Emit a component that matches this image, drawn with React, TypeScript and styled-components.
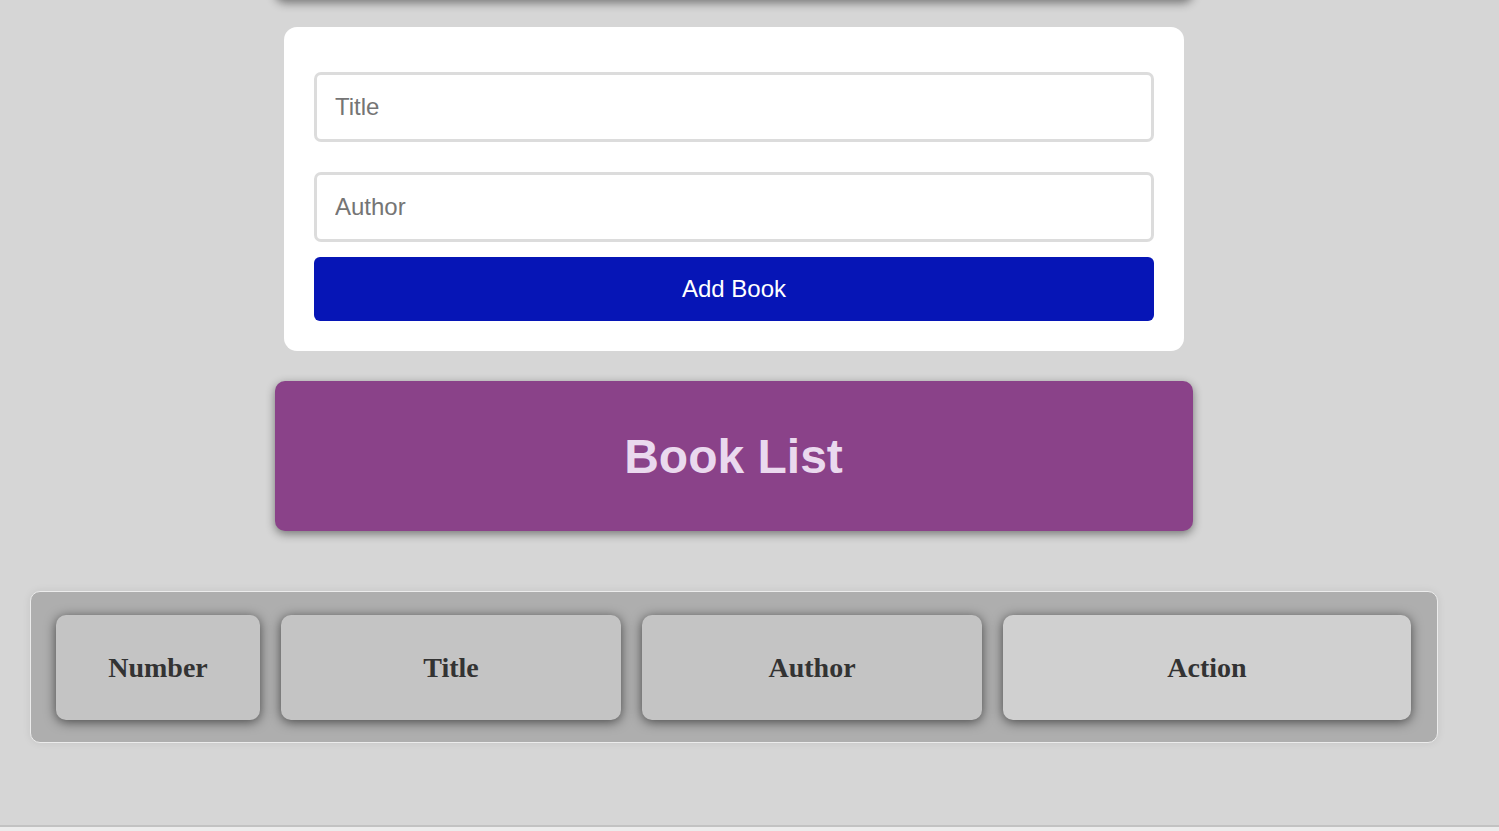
import React from "react";
import styled, { createGlobalStyle } from "styled-components";

const Global = createGlobalStyle`
  html, body { margin: 0; padding: 0; background: #d6d6d6; }
  body { font-family: "Liberation Sans", Arial, sans-serif; overflow: hidden; }
  * { box-sizing: border-box; }
`;

const Page = styled.div`
  width: 1468px;
  display: flex;
  flex-direction: column;
  align-items: center;
`;

const Banner = styled.div<{ $offscreen?: boolean }>`
  width: 918px;
  height: 150px;
  margin-top: ${(p) => (p.$offscreen ? "-150px" : "30px")};
  margin-right: 1px;
  background: #8a4289;
  border-radius: 10px;
  box-shadow: 0 3px 10px rgba(0, 0, 0, 0.45);
  display: flex;
  align-items: center;
  justify-content: center;
`;

const BannerTitle = styled.h1`
  margin: 0;
  font-family: "Liberation Sans", Arial, sans-serif;
  font-size: 48px;
  font-weight: 700;
  color: #ead9ee;
`;

const FormCard = styled.form`
  width: 900px;
  margin-top: 27px;
  background: #ffffff;
  border-radius: 13px;
  padding: 45px 30px 30px;
  display: flex;
  flex-direction: column;
`;

const Input = styled.input<{ $gapAfter: number }>`
  width: 100%;
  height: 70px;
  margin-bottom: ${(p) => p.$gapAfter}px;
  border: 3px solid #dcdcdc;
  border-radius: 7px;
  padding: 0 18px;
  font-family: "Liberation Sans", Arial, sans-serif;
  font-size: 24px;
  color: #333;
  outline: none;
  &::placeholder { color: #757575; }
`;

const SubmitButton = styled.button`
  width: 100%;
  height: 64px;
  border: none;
  border-radius: 6px;
  background: #0615b6;
  color: #ffffff;
  font-family: "Liberation Sans", Arial, sans-serif;
  font-size: 24px;
  cursor: pointer;
`;

const TableBox = styled.div`
  width: 1408px;
  margin-top: 60px;
  background: #aeaeae;
  border: 1px solid #ececec;
  border-radius: 10px;
  box-shadow: 0 0 8px rgba(0, 0, 0, 0.08);
  padding: 23px 26px 22px 25px;
  display: grid;
  grid-template-columns: 204px 340px 340px 408px;
  column-gap: 21px;
`;

const HeadCell = styled.div<{ $light?: boolean }>`
  height: 105px;
  background: ${(p) => (p.$light ? "#d0d0d0" : "#c4c4c4")};
  border-radius: 10px;
  box-shadow: 0 2px 12px rgba(0, 0, 0, 0.6);
  display: flex;
  align-items: center;
  justify-content: center;
  font-family: "Liberation Serif", "Times New Roman", serif;
  font-weight: 700;
  font-size: 28px;
  color: #333333;
`;

const Footer = styled.div`
  width: 1499px;
  margin-top: 82px;
  border-top: 2px solid #c2c2c2;
  height: 20px;
  background: #ececec;
  align-self: flex-start;
`;

export default function App() {
  return (
    <>
      <Global />
      <Page>
        <Banner $offscreen aria-hidden="true" />
        <FormCard onSubmit={(e) => e.preventDefault()}>
          <Input $gapAfter={30} placeholder="Title" />
          <Input $gapAfter={15} placeholder="Author" />
          <SubmitButton type="submit">Add Book</SubmitButton>
        </FormCard>
        <Banner>
          <BannerTitle>Book List</BannerTitle>
        </Banner>
        <TableBox>
          <HeadCell>Number</HeadCell>
          <HeadCell>Title</HeadCell>
          <HeadCell>Author</HeadCell>
          <HeadCell $light>Action</HeadCell>
        </TableBox>
        <Footer />
      </Page>
    </>
  );
}
